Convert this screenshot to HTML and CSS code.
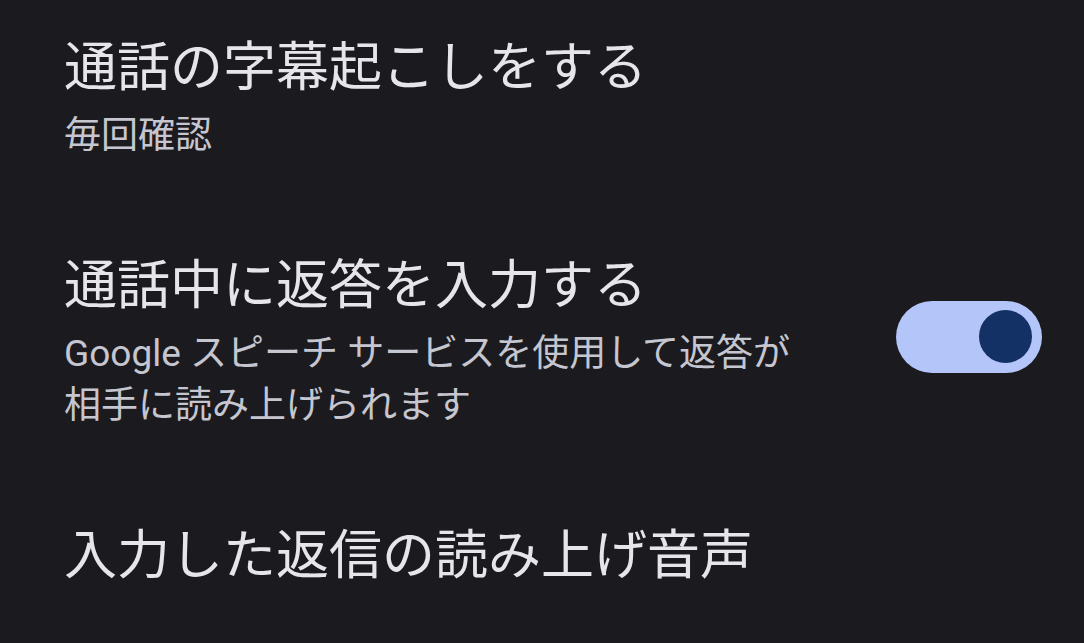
FILE: index.html
```html
<!DOCTYPE html>
<html lang="ja">
<head>
<meta charset="utf-8">
<link rel="stylesheet" href="styles.css">
</head>
<body>
<div class="page">
  <div class="row">
    <div class="text">
      <div class="title">通話の字幕起こしをする</div>
      <div class="summary">毎回確認</div>
    </div>
  </div>
  <div class="row">
    <div class="text narrow">
      <div class="title">通話中に返答を入力する</div>
      <div class="summary">Google スピーチ サービスを使用して返答が<br>相手に読み上げられます</div>
    </div>
    <div class="switch"><div class="thumb"></div></div>
  </div>
  <div class="row">
    <div class="text">
      <div class="title">入力した返信の読み上げ音声</div>
    </div>
  </div>
</div>
</body>
</html>
```

FILE: styles.css
```css
html, body {
  margin: 0;
  padding: 0;
  background: #1b1b1f;
}
.page {
  width: 1084px;
  height: 643px;
  box-sizing: border-box;
  padding: 35px 42px 0 64px;
  display: flex;
  flex-direction: column;
  gap: 91px;
  overflow: hidden;
  font-family: "Roboto", "Noto Sans CJK JP", sans-serif;
}
.row {
  display: flex;
  align-items: center;
  justify-content: space-between;
}
.text {
  display: flex;
  flex-direction: column;
  gap: 9px;
}
.title {
  font-size: 53px;
  line-height: 66px;
  color: #e6e5e9;
  white-space: nowrap;
}
.summary {
  font-size: 37px;
  line-height: 52px;
  color: #c5c6d0;
  white-space: nowrap;
}
.switch {
  width: 146px;
  height: 72px;
  border-radius: 36px;
  background: #b4c5fa;
  display: flex;
  align-items: center;
  justify-content: flex-end;
  padding-right: 10px;
  box-sizing: border-box;
  margin-top: -12px;
}
.thumb {
  width: 53px;
  height: 53px;
  border-radius: 50%;
  background: #133165;
}
```
